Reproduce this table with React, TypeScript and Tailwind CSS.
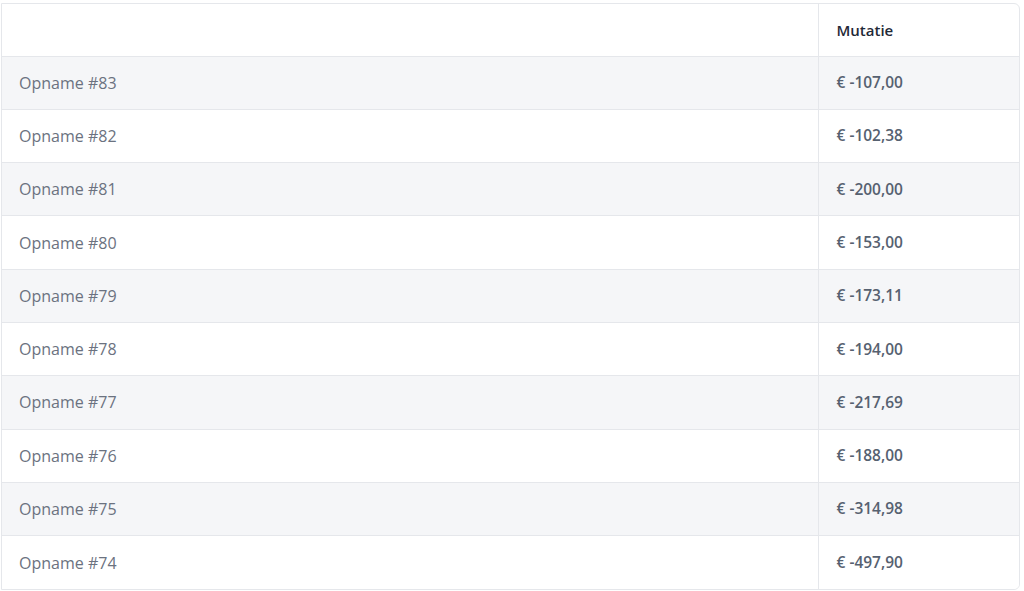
const rows = [
  { name: "Opname #83", amount: "€ -107,00" },
  { name: "Opname #82", amount: "€ -102,38" },
  { name: "Opname #81", amount: "€ -200,00" },
  { name: "Opname #80", amount: "€ -153,00" },
  { name: "Opname #79", amount: "€ -173,11" },
  { name: "Opname #78", amount: "€ -194,00" },
  { name: "Opname #77", amount: "€ -217,69" },
  { name: "Opname #76", amount: "€ -188,00" },
  { name: "Opname #75", amount: "€ -314,98" },
  { name: "Opname #74", amount: "€ -497,90" },
];

export default function App() {
  return (
    <div className="w-[1024px] h-[591px] bg-white pt-[3px] overflow-hidden" style={{ fontFamily: "'Open Sans', sans-serif" }}>
      <div className="ml-px w-[1019px] border border-[#e5e7eb] rounded-tr-[6px] rounded-br-[6px] overflow-hidden">
        <table className="w-full border-collapse">
          <thead>
            <tr className="h-[52px] border-b border-[#e5e7eb]">
              <th className="w-[816px]" />
              <th className="text-left pl-[18px] text-[15px] font-semibold text-[#1f2937] border-l border-[#e5e7eb]">
                Mutatie
              </th>
            </tr>
          </thead>
          <tbody>
            {rows.map((r, i) => (
              <tr
                key={r.name}
                className={`h-[53.3px] border-b border-[#e5e7eb] last:border-b-0 ${i % 2 === 0 ? "bg-[#f5f6f8]" : "bg-white"}`}
              >
                <td className="pl-[17px] text-[16px] text-[#6b7280]">{r.name}</td>
                <td className="pl-[18px] text-[15.5px] font-semibold text-[#566170] border-l border-[#e5e7eb]">
                  {r.amount}
                </td>
              </tr>
            ))}
          </tbody>
        </table>
      </div>
    </div>
  );
}
